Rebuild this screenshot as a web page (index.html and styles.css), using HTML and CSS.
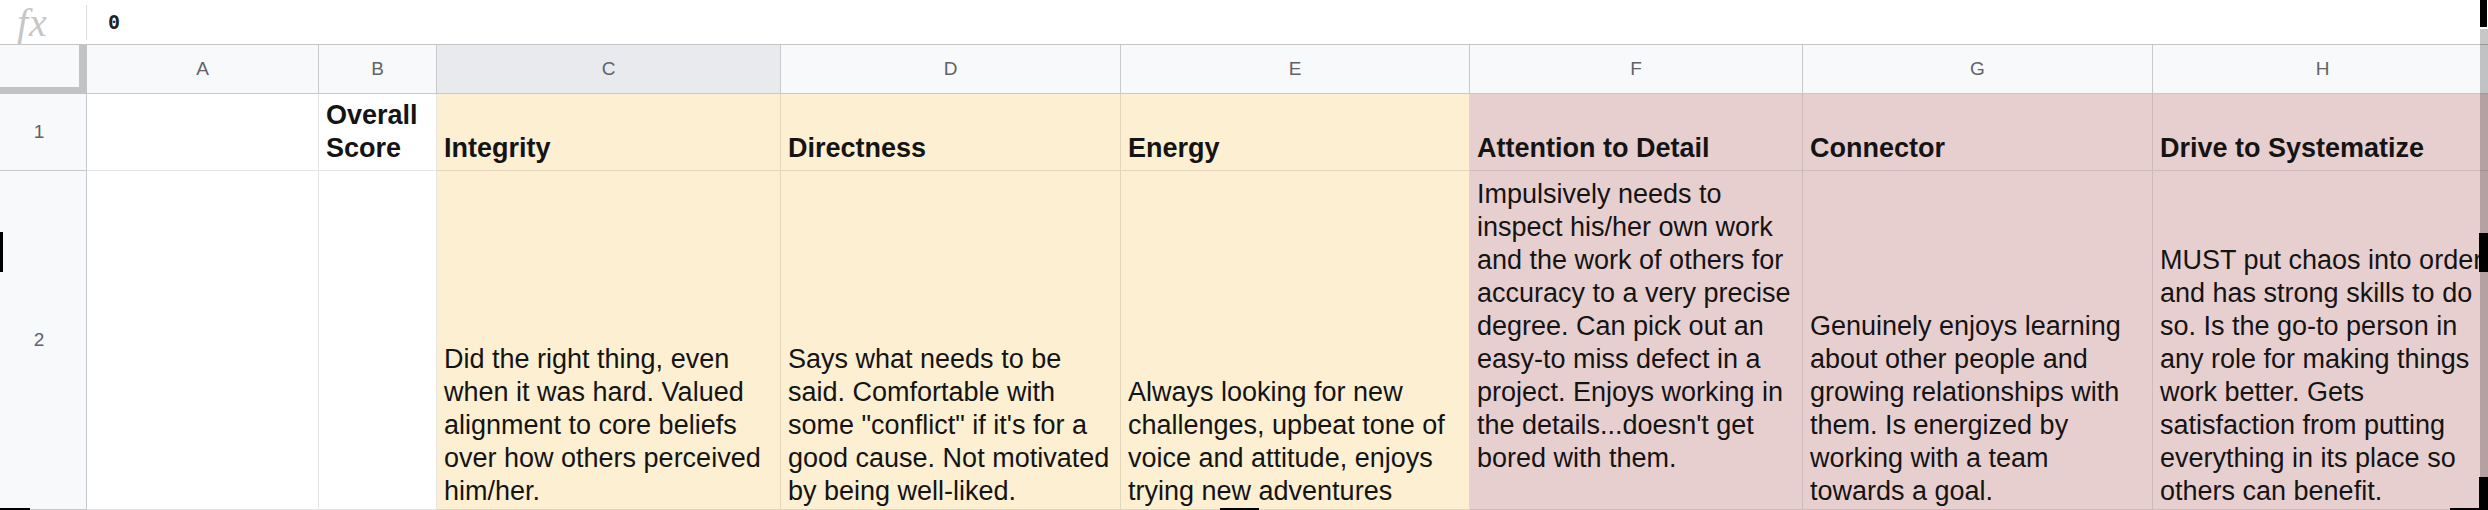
FILE: index.html
```html
<!DOCTYPE html>
<html lang="en">
<head>
    <meta charset="UTF-8">
    <meta name="viewport" content="width=device-width, initial-scale=1.0">
    <title>Traits sheet</title>
    <link rel="stylesheet" href="styles.css">
</head>
<body>
    <div class="formula-bar">
        <div class="fx">fx</div>
        <div class="formula">0</div>
    </div>

    <div class="sheet">
        <!-- column letters -->
        <div class="corner"></div>
        <div class="col-head">A</div>
        <div class="col-head">B</div>
        <div class="col-head active">C</div>
        <div class="col-head">D</div>
        <div class="col-head">E</div>
        <div class="col-head">F</div>
        <div class="col-head">G</div>
        <div class="col-head">H</div>

        <!-- row 1 -->
        <div class="row-head">1</div>
        <div class="cell r1"></div>
        <div class="cell r1">Overall<br>Score</div>
        <div class="cell r1 yellow">Integrity</div>
        <div class="cell r1 yellow">Directness</div>
        <div class="cell r1 yellow">Energy</div>
        <div class="cell r1 pink">Attention to Detail</div>
        <div class="cell r1 pink">Connector</div>
        <div class="cell r1 pink">Drive to Systematize</div>

        <!-- row 2 -->
        <div class="row-head">2</div>
        <div class="cell r2"></div>
        <div class="cell r2"></div>
        <div class="cell r2 yellow">Did the right thing, even<br>when it was hard. Valued<br>alignment to core beliefs<br>over how others perceived<br>him/her.</div>
        <div class="cell r2 yellow">Says what needs to be<br>said. Comfortable with<br>some "conflict" if it's for a<br>good cause. Not motivated<br>by being well-liked.</div>
        <div class="cell r2 yellow">Always looking for new<br>challenges, upbeat tone of<br>voice and attitude, enjoys<br>trying new adventures</div>
        <div class="cell r2 pink extra-line">Impulsively needs to<br>inspect his/her own work<br>and the work of others for<br>accuracy to a very precise<br>degree. Can pick out an<br>easy-to miss defect in a<br>project. Enjoys working in<br>the details...doesn't get<br>bored with them.</div>
        <div class="cell r2 pink">Genuinely enjoys learning<br>about other people and<br>growing relationships with<br>them. Is energized by<br>working with a team<br>towards a goal.</div>
        <div class="cell r2 pink">MUST put chaos into order<br>and has strong skills to do<br>so. Is the go-to person in<br>any role for making things<br>work better. Gets<br>satisfaction from putting<br>everything in its place so<br>others can benefit.</div>
    </div>

    <div class="scrollbar"></div>
    <div class="mark mark-top-right"></div>
    <div class="mark mark-right"></div>
    <div class="mark mark-left"></div>
    <div class="mark mark-bottom-right"></div>
    <div class="mark mark-bottom-edge"></div>
    <div class="mark mark-bottom-left"></div>
    <div class="mark mark-bottom-mid"></div>
</body>
</html>
```

FILE: styles.css
```css
* {
    padding: 0;
    margin: 0;
    box-sizing: border-box;
}

body {
    position: relative;
    width: 2488px;
    height: 510px;
    overflow: hidden;
    background: #fff;
    color: #141414;
    font-family: "Liberation Sans", Arial, sans-serif;
}

/* formula bar */
.formula-bar {
    display: flex;
    align-items: center;
    height: 45px;
    border-bottom: 1px solid #c4c5c6;
}

.fx {
    display: flex;
    align-items: center;
    width: 87px;
    height: 35px;
    padding-left: 17px;
    border-right: 1px solid #dadce0;
    font-family: "Liberation Serif", serif;
    font-style: italic;
    font-size: 40px;
    letter-spacing: 1px;
    color: #c6c6c6;
}

.formula {
    padding-left: 21px;
    font-family: "DejaVu Sans Mono", monospace;
    font-size: 20px;
    font-weight: bold;
    color: #222;
}

/* grid */
.sheet {
    display: grid;
    grid-template-columns: 87px 232px 118px 344px 340px 349px 333px 350px 340px;
    grid-template-rows: 49px 77px 339px;
}

.corner {
    background: #f8f9fa;
    border-right: 8px solid #c1c3c5;
    border-bottom: 7px solid #c1c3c5;
}

.col-head,
.row-head {
    display: flex;
    align-items: center;
    justify-content: center;
    background: #f8f9fa;
    border-right: 1px solid #c8c9ca;
    border-bottom: 1px solid #c8c9ca;
    font-size: 19px;
    color: #5f6368;
}

.col-head.active {
    background: #e8eaed;
}

.row-head {
    padding-right: 8px;
}

.cell {
    display: flex;
    flex-direction: column;
    justify-content: flex-end;
    padding: 0 7px;
    overflow: hidden;
    white-space: nowrap;
    font-size: 27px;
    line-height: 33px;
    border-right: 1px solid rgba(0, 0, 0, 0.1);
    border-bottom: 1px solid rgba(0, 0, 0, 0.1);
}

.r1 {
    padding-bottom: 5px;
    font-weight: bold;
}

.r2 {
    padding-bottom: 1px;
}

.extra-line {
    padding-bottom: 34px;
}

.yellow {
    background: #fcefd2;
}

.pink {
    background: #e8cfcf;
}

/* window edge bits over the sheet */
.scrollbar {
    position: absolute;
    right: 0;
    top: 29px;
    width: 8px;
    height: 481px;
    background: rgba(0, 0, 0, 0.22);
}

.mark {
    position: absolute;
    background: #000;
}

.mark-top-right {
    right: 1px;
    top: 0;
    width: 7px;
    height: 27px;
}

.mark-right {
    right: 0;
    top: 233px;
    width: 9px;
    height: 39px;
}

.mark-left {
    left: 0;
    top: 232px;
    width: 3px;
    height: 40px;
}

.mark-bottom-right {
    right: 0;
    top: 477px;
    width: 9px;
    height: 33px;
}

.mark-bottom-edge {
    right: 9px;
    top: 508px;
    width: 29px;
    height: 2px;
}

.mark-bottom-left {
    left: 0;
    top: 508px;
    width: 30px;
    height: 2px;
}

.mark-bottom-mid {
    left: 1220px;
    top: 508px;
    width: 39px;
    height: 2px;
}
```
